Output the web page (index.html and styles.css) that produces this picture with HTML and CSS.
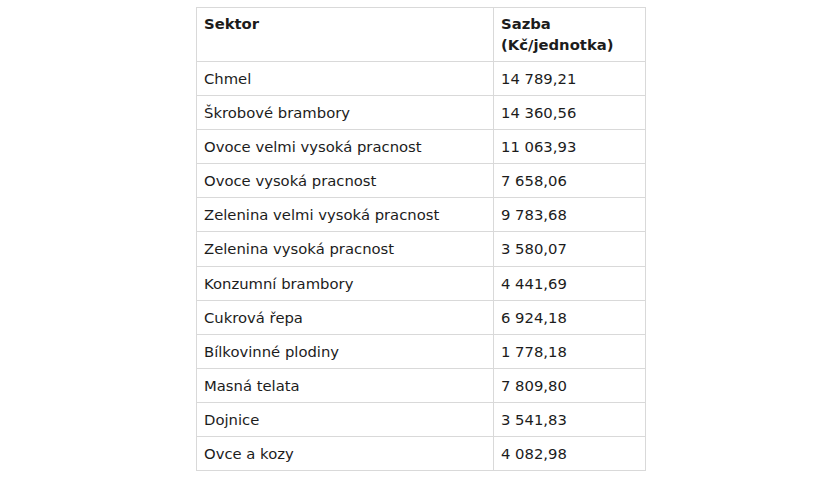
FILE: index.html
```html
<!DOCTYPE html>
<html lang="cs">
<head>
<meta charset="utf-8">
<link rel="stylesheet" href="styles.css">
</head>
<body>
<div class="page">
<table class="rates">
<thead>
<tr><th class="c1">Sektor</th><th class="c2">Sazba<br>(Kč/jednotka)</th></tr>
</thead>
<tbody>
<tr><td>Chmel</td><td>14 789,21</td></tr>
<tr><td>Škrobové brambory</td><td>14 360,56</td></tr>
<tr><td>Ovoce velmi vysoká pracnost</td><td>11 063,93</td></tr>
<tr><td>Ovoce vysoká pracnost</td><td>7 658,06</td></tr>
<tr><td>Zelenina velmi vysoká pracnost</td><td>9 783,68</td></tr>
<tr><td>Zelenina vysoká pracnost</td><td>3 580,07</td></tr>
<tr><td>Konzumní brambory</td><td>4 441,69</td></tr>
<tr><td>Cukrová řepa</td><td>6 924,18</td></tr>
<tr><td>Bílkovinné plodiny</td><td>1 778,18</td></tr>
<tr><td>Masná telata</td><td>7 809,80</td></tr>
<tr><td>Dojnice</td><td>3 541,83</td></tr>
<tr><td>Ovce a kozy</td><td>4 082,98</td></tr>
</tbody>
</table>
</div>
</body>
</html>
```
FILE: styles.css
```css
html, body {
  margin: 0;
  padding: 0;
  background: #fff;
}
.page {
  padding-top: 7px;
  padding-left: 196px;
}
.rates {
  border-collapse: collapse;
  font-family: "DejaVu Sans", Verdana, sans-serif;
  font-size: 14.8px;
  color: #1c1c1c;
  table-layout: fixed;
  width: 449px;
}
.rates th, .rates td {
  border: 1px solid #d9d9d9;
  text-align: left;
  vertical-align: top;
  padding: 0 7px;
  box-sizing: border-box;
}
.rates th {
  font-weight: bold;
  line-height: 21px;
  height: 54px;
  padding-top: 5px;
}
.rates td {
  height: 33.3px;
  line-height: 32px;
  padding-top: 1px;
}
.rates tbody tr:nth-child(3n) td {
  height: 34.3px;
}
.c1 { width: 297px; }
.c2 { width: 152px; }
```
